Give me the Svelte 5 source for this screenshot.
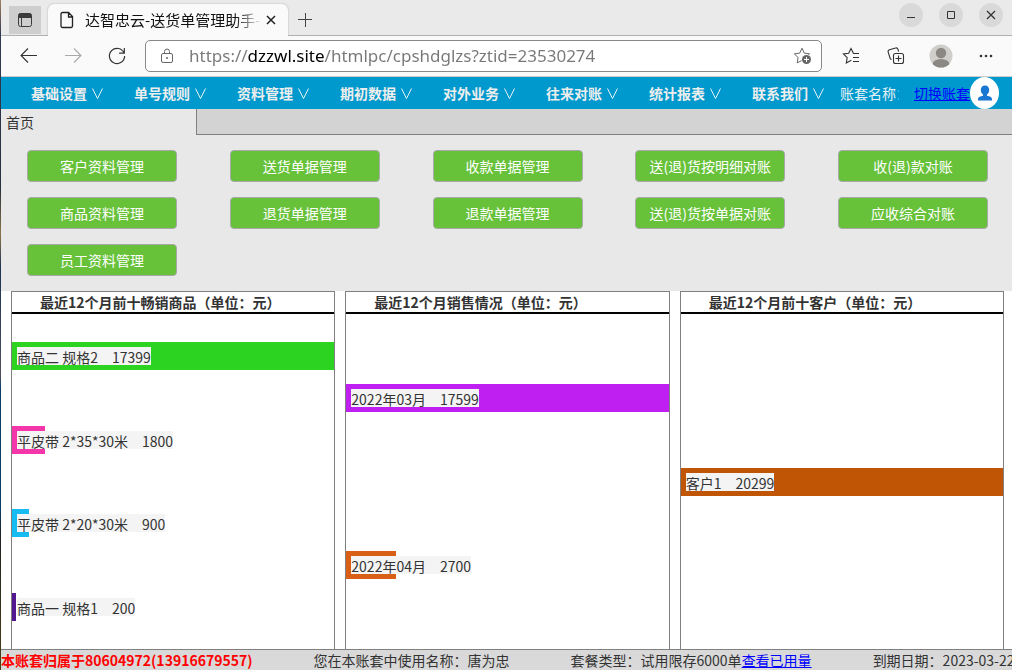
<script>
	let address = 'https://dzzwl.site/htmlpc/cpshdglzs?ztid=23530274';

	const menus = ['基础设置', '单号规则', '资料管理', '期初数据', '对外业务', '往来对账', '统计报表', '联系我们'];

	// One array per column
	const shortcuts = [
		['客户资料管理', '商品资料管理', '员工资料管理'],
		['送货单据管理', '退货单据管理'],
		['收款单据管理', '退款单据管理'],
		['送(退)货按明细对账', '送(退)货按单据对账'],
		['收(退)款对账', '应收综合对账']
	];

	const charts = [
		{
			title: '最近12个月前十畅销商品（单位：元）',
			rows: [
				{ name: '商品二 规格2', value: 17399, color: '#2dd321' },
				{ name: '平皮带 2*35*30米', value: 1800, color: '#f536aa' },
				{ name: '平皮带 2*20*30米', value: 900, color: '#16bbf2' },
				{ name: '商品一 规格1', value: 200, color: '#531890' }
			]
		},
		{
			title: '最近12个月销售情况（单位：元）',
			rows: [
				{ name: '2022年03月', value: 17599, color: '#bf1ff1' },
				{ name: '2022年04月', value: 2700, color: '#d85f15' }
			]
		},
		{
			title: '最近12个月前十客户（单位：元）',
			rows: [{ name: '客户1', value: 20299, color: '#c05605' }]
		}
	];

	// Bar width relative to the biggest value in the chart
	function barWidth(rows, value) {
		const max = Math.max(...rows.map((row) => row.value));
		return (value / max) * 100;
	}
</script>

<div class="window">
	<header class="titlebar">
		<button class="tab-actions" aria-label="标签页操作">
			<svg width="16" height="16" viewBox="0 0 16 16" fill="none" stroke="#3b3b3b">
				<rect x="1.5" y="1.5" width="13" height="13" rx="2" />
				<path d="M2 2h12v3.5H2z" fill="#3b3b3b" />
				<path d="M4.5 5v9" />
			</svg>
		</button>
		<div class="browser-tab">
			<svg width="14" height="18" viewBox="0 0 14 18" fill="none" stroke="#222" stroke-width="1.3">
				<path d="M2.5 1.5h6l4 4v9.5a1.5 1.5 0 0 1-1.5 1.5h-8.5a1.5 1.5 0 0 1-1.5-1.5v-12a1.5 1.5 0 0 1 1.5-1.5zM8.5 1.500v4.500h4" />
			</svg>
			<span class="tab-title">达智忠云-送货单管理助手-</span>
			<button class="plain" aria-label="关闭标签页">
				<svg width="10" height="10" viewBox="0 0 10 10" stroke="#222" stroke-width="1.5"><path d="M1 1l8 8M9 1L1 9" /></svg>
			</button>
		</div>
		<button class="plain new-tab" aria-label="新建标签页">
			<svg width="14" height="14" viewBox="0 0 14 14" stroke="#444"><path d="M7.5 0v14M0 6.500h14" /></svg>
		</button>
		<div class="window-controls">
			<button aria-label="最小化"><svg width="10" height="10" viewBox="0 0 10 10" stroke="#333"><path d="M1 7.5h8" /></svg></button>
			<button aria-label="最大化"><svg width="10" height="10" viewBox="0 0 10 10" stroke="#333" fill="none"><path d="M1.5 1.5h7v7h-7z" /></svg></button>
			<button aria-label="关闭"><svg width="10" height="10" viewBox="0 0 10 10" stroke="#333" stroke-width="1.3"><path d="M1 1l8 8M9 1L1 9" /></svg></button>
		</div>
	</header>

	<div class="toolbar">
		<div class="history">
			<button class="plain" aria-label="后退">
				<svg width="20" height="20" viewBox="0 0 20 20" fill="none" stroke="#333" stroke-width="1.1"><path d="M18 9.500H2.500M9 2.500l-7 7 7 7" /></svg>
			</button>
			<button class="plain" aria-label="前进">
				<svg width="20" height="20" viewBox="0 0 20 20" fill="none" stroke="#aaa" stroke-width="1.1"><path d="M2 9.500h15.500M11 2.500l7 7-7 7" /></svg>
			</button>
			<button class="plain" aria-label="刷新">
				<svg width="20" height="20" viewBox="0 0 20 20" fill="none" stroke="#333" stroke-width="1.2"><path d="M17 7A7.6 7.6 0 1 0 17.6 10M17.3 2v5.2h-5.2" /></svg>
			</button>
		</div>
		<div class="address">
			<svg width="14" height="16" viewBox="0 0 14 16" fill="none" stroke="#666">
				<rect x="1.5" y="5.5" width="11" height="9" rx="1.5" />
				<path d="M4.5 5.5V3.5a2.5 2.5 0 0 1 5 0v2" />
				<circle cx="7" cy="10" r=".6" fill="#666" />
			</svg>
			<input type="text" aria-label="地址栏" spellcheck="false" bind:value={address} />
			<button class="plain" aria-label="添加到收藏夹">
				<svg width="20" height="18" viewBox="0 0 20 18" fill="none" stroke="#666">
					<path d="M9 1.2l2.3 4.9 5.3.8-3.8 3.6.9 5.4L9 13.4l-4.8 2.5.9-5.4L1.3 6.9l5.4-.8z" />
					<circle cx="13.5" cy="12.5" r="5" fill="#fff" stroke="none" />
					<circle cx="13.5" cy="12.5" r="4.5" fill="#666" stroke="none" />
					<path d="M13.5 10v5M11 12.5h5" stroke="#fff" />
				</svg>
			</button>
		</div>
		<div class="tools">
			<button class="plain" aria-label="收藏夹">
				<svg width="18" height="18" viewBox="0 0 18 18" fill="none" stroke="#333" stroke-width="1.1">
					<path d="M17 6.5h-5.5L9 1.4 6.7 6.2l-5.3.8L5.2 10.7l-.9 5.3 5-2.8M11 10.5h6M11 14.5h6" />
				</svg>
			</button>
			<button class="plain" aria-label="集锦">
				<svg width="18" height="18" viewBox="0 0 18 18" fill="none" stroke="#333" stroke-width="1.1">
					<rect x="6.500" y="6.500" width="10" height="10" rx="2" />
					<path d="M11.5 8.5v6M8.5 11.5h6M4.500 12.500c-.8-.2-1.300-.8-1.500-1.500L1.200 5.200a2 2 0 0 1 1.300-2.500l6-1.700a2 2 0 0 1 2.500 1.300l.6 2.200" />
				</svg>
			</button>
			<button class="plain" aria-label="个人资料">
				<svg width="24" height="24" viewBox="0 0 24 24">
					<defs><clipPath id="avatar"><circle cx="12" cy="12" r="11.5" /></clipPath></defs>
					<circle cx="12" cy="12" r="11.5" fill="#d0cfcb" />
					<g clip-path="url(#avatar)" fill="#8b8783">
						<circle cx="12" cy="9" r="5.2" />
						<ellipse cx="12" cy="20.5" rx="8.5" ry="5.5" />
					</g>
				</svg>
			</button>
			<button class="plain" aria-label="更多">
				<svg width="14" height="4" viewBox="0 0 14 4" fill="#333"><circle cx="2" cy="2" r="1.300" /><circle cx="7" cy="2" r="1.300" /><circle cx="12" cy="2" r="1.300" /></svg>
			</button>
		</div>
	</div>

	<nav>
		<div class="menus">
			{#each menus as menu}
				<button>
					{menu}
					<svg width="11" height="14" viewBox="0 0 11 14" fill="none" stroke="#e4f2f8"><path d="M.5 2.500l5 10 5-10" /></svg>
				</button>
			{/each}
		</div>
		<span class="account">账套名称：</span>
		<a href="#switch">切换账套</a>
		<button class="user" aria-label="用户">
			<svg width="16" height="16" viewBox="0 0 16 16" fill="#1976d2">
				<path d="M8 .5c2.600 0 4.200 1.800 4.200 4.500 0 2-1 3.700-2.200 4.500v1.200c2.700.4 5 1.300 5 3.300v1.500H1V14c0-2 2.300-2.900 5-3.300V9.500C4.800 8.700 3.800 7 3.800 5 3.800 2.300 5.400.5 8 .5z" />
			</svg>
		</button>
	</nav>

	<div class="page-tabs">
		<button>首页</button>
		<div class="rest"></div>
	</div>

	<section class="shortcuts">
		{#each shortcuts as column}
			<div class="column">
				{#each column as label}
					<button>{label}</button>
				{/each}
			</div>
		{/each}
	</section>

	<main>
		{#each charts as chart}
			<section class="chart">
				<h2>{chart.title}</h2>
				<div class="rows">
					{#each chart.rows as row}
						<div class="bar" style="width: {barWidth(chart.rows, row.value)}%; background: {row.color}">
							<span>{row.name}　{row.value}</span>
						</div>
					{/each}
				</div>
			</section>
		{/each}
	</main>

	<footer>
		<strong>本账套归属于80604972(13916679557)</strong>
		<span>您在本账套中使用名称：唐为忠</span>
		<span>套餐类型：试用限存6000单<a href="#usage">查看已用量</a></span>
		<span>到期日期：2023-03-22</span>
	</footer>
</div>

<style>
	:global(body) {
		margin: 0;
	}

	.window {
		display: flex;
		flex-direction: column;
		height: 100vh;
		box-sizing: border-box;
		padding-left: 1px;
		overflow: hidden;
		font: 14px/20px "Noto Sans CJK SC", sans-serif;
		color: #333;
		/* desktop showing along the left edge */
		background: linear-gradient(#a58260, #323c50 5%, #28303f 28%, #8a7548 35%, #1c3354 40%, #50505c 56%, #0b3c68 58%, #0b3c68 76%, #1d2320 80%, #4a3f18);
	}

	button {
		font: inherit;
		padding: 0;
		border: none;
		cursor: pointer;
	}

	svg {
		display: block;
		flex: none;
	}

	.plain {
		display: flex;
		align-items: center;
		justify-content: center;
		background: none;
	}

	/* browser */
	.titlebar {
		display: flex;
		align-items: flex-end;
		flex: none;
		height: 36px;
		box-sizing: border-box;
		padding-left: 8px;
		background: linear-gradient(#b0b0b0, #b0b0b0) bottom / 100% 1px no-repeat #eaeaea;
	}

	.tab-actions {
		display: flex;
		align-items: center;
		justify-content: center;
		width: 32px;
		height: 28px;
		margin-bottom: 2px;
		background: #cecece;
	}

	.browser-tab {
		display: flex;
		align-items: center;
		width: 240px;
		height: 32px;
		box-sizing: border-box;
		margin-left: 7px;
		padding: 0 12px;
		border-radius: 6px 6px 0 0;
		background: #fafafa;
		box-shadow: 0 0 2px #aaa;
		clip-path: inset(-3px -3px 0 -3px);
		font-size: 15px;
		color: #111;
	}

	.tab-title {
		flex: 1;
		margin: 0 4px 0 11px;
		overflow: hidden;
		white-space: nowrap;
		mask-image: linear-gradient(to right, #000 85%, transparent);
	}

	.new-tab {
		width: 34px;
		height: 32px;
	}

	.window-controls {
		display: flex;
		align-self: flex-start;
		gap: 16px;
		margin: 3px 9px 0 auto;
	}

	.window-controls button {
		display: flex;
		align-items: center;
		justify-content: center;
		width: 24px;
		height: 24px;
		border-radius: 50%;
		background: #d9d9d9;
	}

	.toolbar {
		display: flex;
		align-items: center;
		flex: none;
		height: 41px;
		box-sizing: border-box;
		padding: 0 14px 1px 18px;
		background: #fafafa;
		border-bottom: 1px solid #ccc;
	}

	.history {
		display: flex;
		gap: 24px;
	}

	.tools {
		display: flex;
		align-items: center;
		gap: 21px;
	}

	.tools button {
		width: 24px;
		height: 24px;
	}

	.address {
		display: flex;
		align-items: center;
		flex: 1;
		height: 32px;
		box-sizing: border-box;
		margin: 0 17px 0 18px;
		padding: 0 8px 0 14px;
		border: 1px solid #888;
		border-radius: 5px;
		background: #fff;
	}

	.address input {
		flex: 1;
		min-width: 0;
		margin-left: 15px;
		padding: 0;
		border: none;
		outline: none;
		font: 17px/24px "Noto Sans", sans-serif;
		/* the host name is darker than the rest of the address */
		color: transparent;
		background: linear-gradient(to right, #777 59px, #000 59px, #000 136px, #777 136px);
		background-clip: text;
		-webkit-background-clip: text;
	}

	/* menu bar */
	nav {
		display: flex;
		align-items: center;
		flex: none;
		height: 32px;
		padding-right: 13px;
		background: #0099cd;
	}

	.menus {
		display: flex;
		gap: 31px;
		margin-left: 30px;
	}

	.menus button {
		display: flex;
		align-items: center;
		justify-content: space-between;
		width: 72px;
		background: none;
		font-weight: bold;
		color: #eee;
		white-space: nowrap;
	}

	.account {
		width: 59px;
		margin: 0 15px 0 auto;
		overflow: hidden;
		white-space: nowrap;
		color: #e6f2f6;
	}

	a {
		color: #00f;
	}

	.user {
		display: flex;
		align-items: center;
		justify-content: center;
		width: 29px;
		height: 32px;
		border-radius: 50%;
		background: #fff;
	}

	.page-tabs {
		display: flex;
		flex: none;
		height: 26px;
		background: #e8e8e8;
	}

	.page-tabs button {
		width: 195px;
		padding: 0 5px;
		background: none;
		color: #333;
		text-align: left;
	}

	.rest {
		flex: 1;
		background: #d3d3d3;
		border-left: 1px solid #808080;
		border-bottom: 1px solid #808080;
	}

	.shortcuts {
		display: flex;
		justify-content: space-between;
		flex: none;
		padding: 15px 24px 15px 26px;
		background: #e8e8e8;
	}

	.column {
		display: flex;
		flex-direction: column;
		gap: 15px;
	}

	.shortcuts button {
		width: 150px;
		height: 32px;
		border: 1px solid #a9a9a9;
		border-radius: 4px;
		background: #67c23a;
		color: #fff;
	}

	/* charts */
	main {
		display: grid;
		grid-template-columns: repeat(3, 1fr);
		gap: 10px;
		flex: 1;
		min-height: 0;
		padding: 0 8px 0 10px;
		background: #fff;
	}

	.chart {
		display: flex;
		flex-direction: column;
		border: 1px solid #808080;
		border-bottom: none;
	}

	h2 {
		margin: 0;
		padding-left: 28px;
		border-bottom: 2px solid #000;
		font-size: 14px;
		line-height: 20px;
	}

	.rows {
		display: flex;
		flex-direction: column;
		justify-content: space-around;
		flex: 1;
	}

	/* the label keeps its full width even when the bar is shorter */
	.bar {
		height: 28px;
		padding-top: 5px;
		box-sizing: border-box;
		white-space: nowrap;
	}

	.bar span {
		display: block;
		width: max-content;
		height: 18px;
		margin-left: 5px;
		line-height: 20px;
		background: #f4f4f4;
	}

	footer {
		display: flex;
		gap: 61px;
		flex: none;
		height: 20px;
		border-top: 1px solid #808080;
		background: #d9d9d9;
		white-space: nowrap;
		overflow: hidden;
	}

	footer strong {
		color: #f00;
	}
</style>
